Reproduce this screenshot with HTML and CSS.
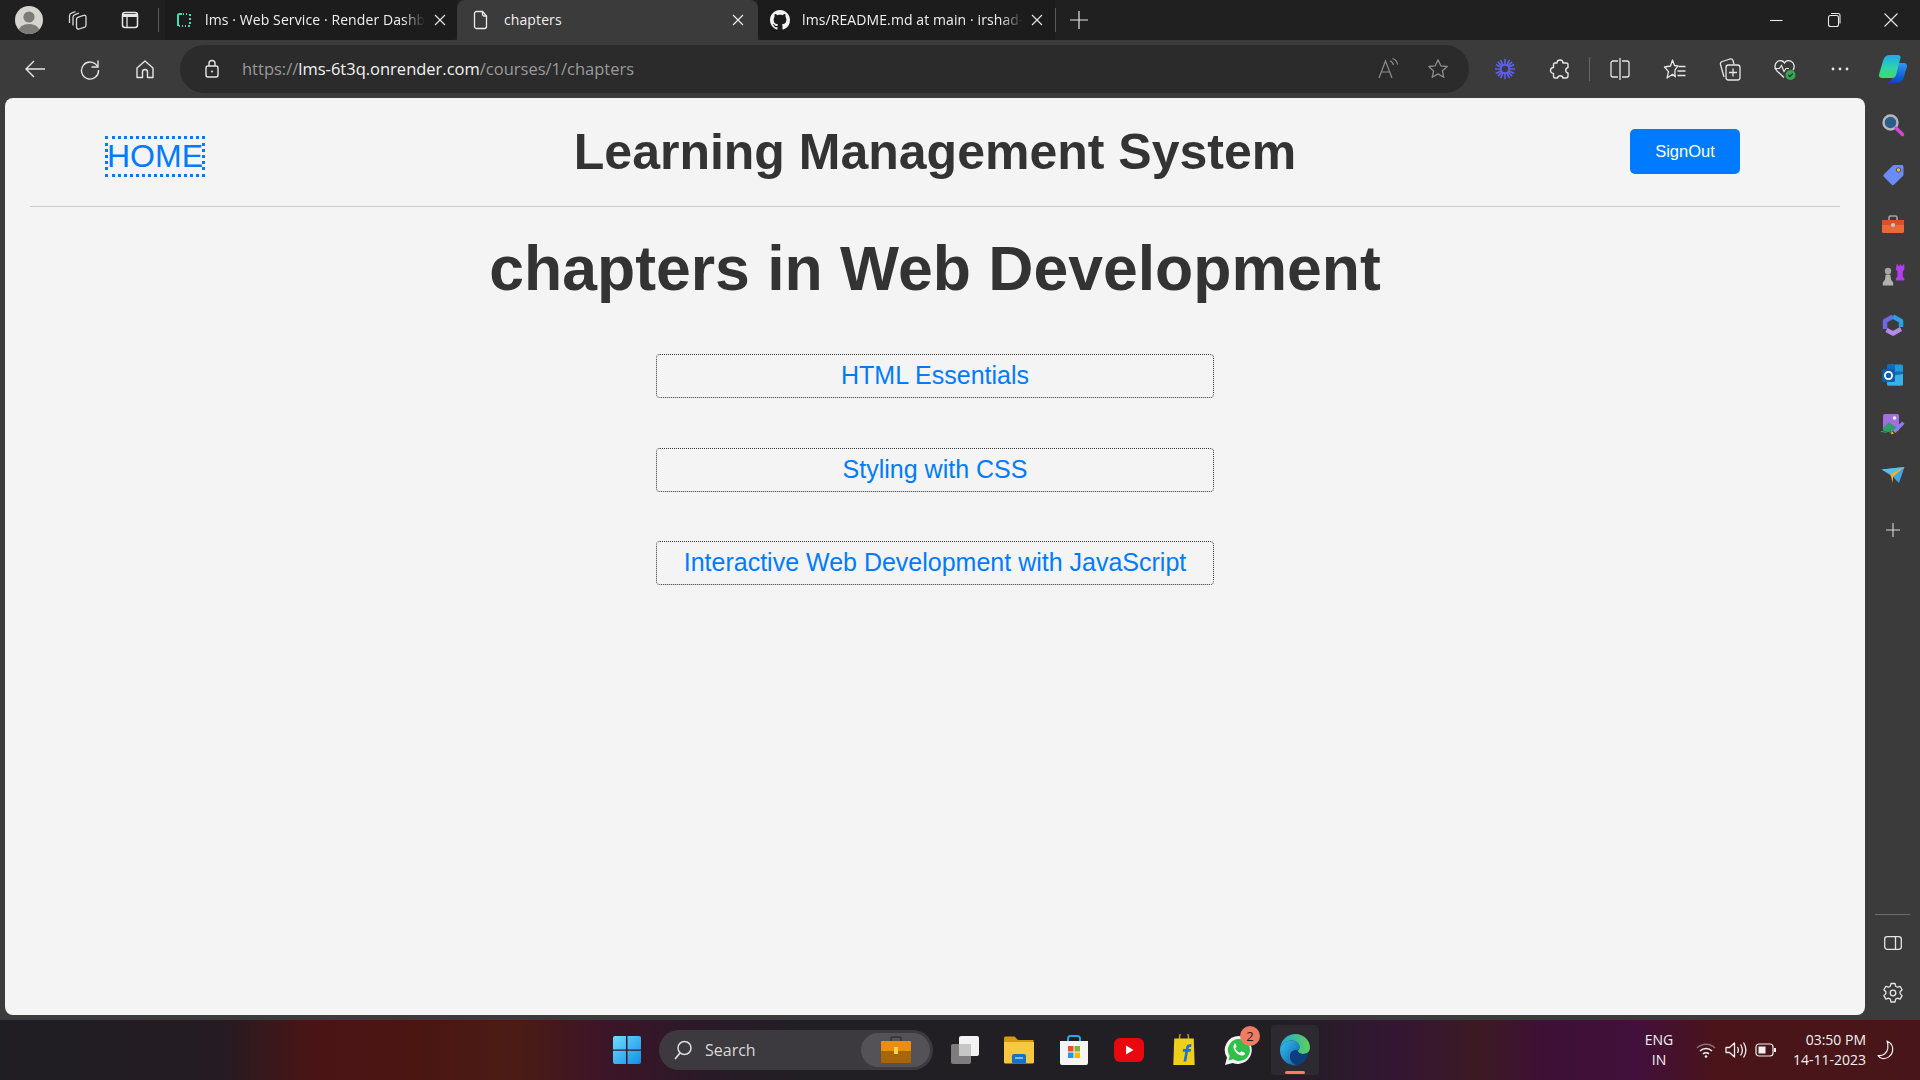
FILE: index.html
```html
<!doctype html>
<html>
<head>
    <title>chapters</title>
    <meta charset="utf-8">
    <link rel="stylesheet" href="styles.css">
</head>
<body>
<div class="window">
    <div class="tabstrip">
        <div class="avatar">
            <svg width="28" height="28" viewBox="0 0 28 28"><defs><clipPath id="avclip"><circle cx="14" cy="14" r="14"/></clipPath></defs><g clip-path="url(#avclip)"><rect width="28" height="28" fill="#d6d4cf"/><circle cx="14" cy="11" r="5.6" fill="#7d7b78"/><ellipse cx="14" cy="25" rx="10.5" ry="7" fill="#7d7b78"/></g></svg>
        </div>
        <div class="strip-btn">
            <svg width="24" height="24" viewBox="0 0 24 24" fill="none" stroke="#d8d8d8" stroke-width="1.300"><path d="M4.500 15V8a3 3 0 0 1 2-2.800L10.500 3.500"/><path d="M8 17.500V9.500a3 3 0 0 1 2-2.800l4-1.700"/><path d="M11.500 11.500a2.500 2.500 0 0 1 1.800-2.400l5.500-1.700a1.600 1.600 0 0 1 2.200 1.500V17a2.500 2.500 0 0 1-1.800 2.400L14 21a2 2 0 0 1-2.500-2z" stroke-linejoin="round"/></svg>
        </div>
        <div class="strip-btn wide">
            <svg width="20" height="20" viewBox="0 0 20 20" fill="none" stroke="#e6e6e6" stroke-width="1.500"><rect x="2.500" y="2.500" width="15" height="15" rx="2.500"/><path d="M7 7v10.500" stroke-width="1.300"/><path d="M3 5.500h14" stroke-width="3"/></svg>
        </div>
        <div class="strip-divider"></div>
        <div class="tab tab-first">
            <svg class="tab-icon" width="16" height="16" viewBox="0 0 16 16" fill="none"><path d="M6 2H3.500A1.500 1.500 0 0 0 2 3.500V14" stroke="#3fe0b8" stroke-width="2"/><path d="M3 14h1M6 14h1M9 14h1M12 14h2M14 12v-2M14 8V6M14 4V2M11 2h-1M8 2h-1" stroke="#3fe0b8" stroke-width="2"/></svg>
            <span class="tab-title">lms · Web Service · Render Dashboard</span>
            <svg class="tab-close" width="16" height="16" viewBox="0 0 16 16" stroke="#e8e8e8" stroke-width="1.100"><path d="M3 3l10 10M13 3 3 13"/></svg>
        </div>
        <div class="tab tab-active">
            <svg class="tab-icon" width="16" height="20" viewBox="0 0 16 20" fill="none" stroke="#ececec" stroke-width="1.300"><path d="M3.500 1.500h6l4 4.500v10.500a2 2 0 0 1-2 2h-8a2 2 0 0 1-2-2v-13a2 2 0 0 1 2-2z"/><path d="M9.500 1.500v3a1.500 1.500 0 0 0 1.500 1.500h2.500"/></svg>
            <span class="tab-title">chapters</span>
            <svg class="tab-close" width="16" height="16" viewBox="0 0 16 16" stroke="#f0f0f0" stroke-width="1.100"><path d="M3 3l10 10M13 3 3 13"/></svg>
        </div>
        <div class="tab tab-last">
            <svg class="tab-icon" width="20" height="20" viewBox="0 0 16 16" fill="#f4f4f4"><path d="M8 0C3.58 0 0 3.58 0 8c0 3.54 2.29 6.53 5.47 7.59.4.07.55-.17.55-.38 0-.19-.01-.82-.01-1.49-2.01.37-2.53-.49-2.69-.94-.09-.23-.48-.94-.82-1.13-.28-.15-.68-.52-.01-.53.63-.01 1.08.58 1.23.82.72 1.21 1.87.87 2.33.66.07-.52.28-.87.51-1.07-1.78-.2-3.64-.89-3.64-3.95 0-.87.31-1.59.82-2.15-.08-.2-.36-1.02.08-2.12 0 0 .67-.21 2.2.82.64-.18 1.32-.27 2-.27.68 0 1.36.09 2 .27 1.53-1.04 2.2-.82 2.2-.82.44 1.1.16 1.92.08 2.12.51.56.82 1.27.82 2.15 0 3.07-1.87 3.75-3.65 3.95.29.25.54.73.54 1.48 0 1.07-.01 1.93-.01 2.2 0 .21.15.46.55.38A8.013 8.013 0 0 0 16 8c0-4.42-3.58-8-8-8z"/></svg>
            <span class="tab-title">lms/README.md at main · irshad-ahmed/lms</span>
            <svg class="tab-close" width="16" height="16" viewBox="0 0 16 16" stroke="#e8e8e8" stroke-width="1.100"><path d="M3 3l10 10M13 3 3 13"/></svg>
        </div>
        <div class="strip-divider"></div>
        <div class="new-tab">
            <svg width="20" height="20" viewBox="0 0 20 20" stroke="#e8e8e8" stroke-width="1.200"><path d="M10 1v18M1 10h18"/></svg>
        </div>
        <div class="window-controls">
            <svg width="16" height="16" viewBox="0 0 16 16" stroke="#e8e8e8" stroke-width="1.100"><path d="M2 8.500h12.500"/></svg>
            <svg width="16" height="16" viewBox="0 0 16 16" fill="none" stroke="#e8e8e8" stroke-width="1.100"><rect x="2.500" y="3.500" width="10" height="11" rx="2"/><path d="M5 1.500h7a2 2 0 0 1 2 2v8"/></svg>
            <svg width="16" height="16" viewBox="0 0 16 16" stroke="#e8e8e8" stroke-width="1.100"><path d="M1.500 1.500l13 13M14.500 1.500l-13 13"/></svg>
        </div>
    </div>

    <div class="toolbar">
        <div class="tool">
            <svg width="22" height="22" viewBox="0 0 22 22" fill="none" stroke="#e6e6e6" stroke-width="1.400"><path d="M2 11h19M10 3l-8 8 8 8"/></svg>
        </div>
        <div class="tool">
            <svg width="22" height="22" viewBox="0 0 22 22" fill="none" stroke="#e6e6e6" stroke-width="1.400"><path d="M18.500 8.500A8.500 8.500 0 1 0 19.500 12"/><path d="M19 2.500v6.500h-6.500"/></svg>
        </div>
        <div class="tool">
            <svg width="22" height="22" viewBox="0 0 22 22" fill="none" stroke="#e6e6e6" stroke-width="1.400"><path d="M3 10 11 3l8 7v9.500h-5.500V14a2.500 2.500 0 0 0-5 0v5.500H3z" stroke-linejoin="round"/></svg>
        </div>
        <div class="address">
            <svg width="16" height="20" viewBox="0 0 16 20" fill="none" stroke="#e6e6e6" stroke-width="1.400"><rect x="2" y="7" width="12" height="11" rx="2"/><path d="M5 7V4.500a3 3 0 0 1 6 0V7"/><circle cx="8" cy="12.500" r="1" fill="#e6e6e6" stroke="none"/></svg>
            <span class="url"><span class="url-dim">https://</span><span class="url-host">lms-6t3q.onrender.com</span><span class="url-dim">/courses/1/chapters</span></span>
            <svg class="read-aloud" width="24" height="22" viewBox="0 0 24 22" fill="none" stroke="#8c8c8c" stroke-width="1.200"><path d="M2 20 8.500 3l6.500 17M4.500 14h8"/><path d="M13 3c2 .5 3 2 3.500 4M15.500.5c3 .8 4.500 3 5 6"/></svg>
            <svg class="addr-star" width="22" height="22" viewBox="0 0 22 22" fill="none" stroke="#8c8c8c" stroke-width="1.300"><path d="M11 1.800l2.800 6 6.400.7-4.800 4.400 1.400 6.400L11 15.900l-5.800 3.400 1.400-6.400L1.800 8.500l6.400-.7z" stroke-linejoin="round"/></svg>
        </div>
        <div class="tool">
            <svg width="22" height="22" viewBox="0 0 22 22" stroke="#5f5ff7"><path d="M11 1v20M1 11h20M3.900 3.900l14.200 14.200M18.100 3.900 3.900 18.100M6.500 1.800l9 18.400M15.500 1.800l-9 18.400M1.800 6.500l18.400 9M20.200 6.500l-18.400 9" stroke-width="1.600"/><circle cx="11" cy="11" r="4.200" fill="#3b3b3b" stroke-width="1.800"/></svg>
        </div>
        <div class="tool">
            <svg width="22" height="22" viewBox="0 0 22 22" fill="none" stroke="#e6e6e6" stroke-width="1.400"><path d="M8 5a3 3 0 0 1 6 0h3.500a1.500 1.500 0 0 1 1.500 1.500V9.500a2.800 2.800 0 0 0 0 5.500v3a2 2 0 0 1-2 2h-3a2.800 2.800 0 0 0-5.500 0H6a1.500 1.500 0 0 1-1.500-1.500v-3a3 3 0 0 1 0-6V6.500A1.500 1.500 0 0 1 6 5z" stroke-linejoin="round"/></svg>
        </div>
        <div class="tool-divider"></div>
        <div class="tool">
            <svg width="22" height="24" viewBox="0 0 22 24" fill="none" stroke="#e6e6e6" stroke-width="1.300"><path d="M9 4H4a2 2 0 0 0-2 2v12a2 2 0 0 0 2 2h5M13 4h5a2 2 0 0 1 2 2v12a2 2 0 0 1-2 2h-5M11 1v22"/></svg>
        </div>
        <div class="tool">
            <svg width="24" height="22" viewBox="0 0 24 22" fill="none" stroke="#e6e6e6" stroke-width="1.300"><path d="M9.500 2l2 5.500 3.500.3-3 4-.1 4 .4 3-2.800-2.500-5.500 3.700 1.500-6.300L1.500 9l6-1z" stroke-linejoin="round"/><path d="M15.500 8.500h7M14.500 13h8M14.500 17.500h8"/></svg>
        </div>
        <div class="tool">
            <svg width="24" height="24" viewBox="0 0 24 24" fill="none" stroke="#e6e6e6" stroke-width="1.300"><path d="M6 20 2.500 7.500a2.500 2.500 0 0 1 1.700-3L12 2a2.500 2.500 0 0 1 3 1.500L16 7"/><rect x="8" y="8" width="14" height="15" rx="2.500"/><path d="M15 11.500v8M11 15.500h8"/></svg>
        </div>
        <div class="tool">
            <svg width="24" height="24" viewBox="0 0 24 24" fill="none"><path d="M11 20.500 4 14C1 11 1.500 6.500 4.500 4.500 7 3 10 3.500 11.500 6c1.500-2.500 4.500-3 7-1.500 3 2 3.500 6 1.500 8.500" stroke="#e6e6e6" stroke-width="1.300"/><path d="M1.500 11.500h5l2-3 2.500 6 2-3h3" stroke="#e6e6e6" stroke-width="1.200"/><circle cx="17.500" cy="18" r="5" fill="#3aa655"/><path d="M15.300 18l1.600 1.600 2.800-3" stroke="#1d2a1f" stroke-width="1.200"/></svg>
        </div>
        <div class="tool">
            <svg width="20" height="6" viewBox="0 0 20 6" fill="#e6e6e6"><circle cx="3" cy="3" r="1.400"/><circle cx="10" cy="3" r="1.400"/><circle cx="17" cy="3" r="1.400"/></svg>
        </div>
        <div class="tool copilot">
            <svg width="32" height="32" viewBox="0 0 32 32"><defs><linearGradient id="cpA" x1="0" y1="0" x2="0" y2="1"><stop offset="0" stop-color="#21a8f0"/><stop offset=".6" stop-color="#2fd6a0"/><stop offset="1" stop-color="#45d870"/></linearGradient><linearGradient id="cpB" x1="0" y1="0" x2="0" y2="1"><stop offset="0" stop-color="#2a9bf5"/><stop offset="1" stop-color="#1440c4"/></linearGradient></defs><path d="M19 10h8c2 0 3.500 1.500 3 3.500L26.500 25c-.8 3-3 5-6 5H9c3 0 4.500-1.500 5.500-4z" fill="url(#cpB)"/><path d="M12 2h9c2 0 3 1.500 2.500 3L19 22c-.6 2-2 3-4 3H5c-2 0-3.500-1.500-3-3.500L6 8c.8-3 3-6 6-6z" fill="url(#cpA)"/></svg>
        </div>
    </div>

    <div class="main-row">
        <div class="viewport">
            <header class="site-header">
                <a class="home-link" href="#">HOME</a>
                <h1 class="site-title">Learning Management System</h1>
                <button class="signout">SignOut</button>
            </header>
            <hr class="rule">
            <h1 class="page-title">chapters in Web Development</h1>
            <ul class="chapter-list">
                <li><a href="#">HTML Essentials</a></li>
                <li><a href="#">Styling with CSS</a></li>
                <li><a href="#">Interactive Web Development with JavaScript</a></li>
            </ul>
        </div>

        <aside class="sidebar">
            <div class="side-item">
                <svg width="24" height="24" viewBox="0 0 24 24"><circle cx="9.500" cy="9.500" r="7" fill="#2b5f8a" stroke="#b4b8bd" stroke-width="2.400"/><path d="M15 15l6.500 6.500" stroke="#d946d6" stroke-width="3.400" stroke-linecap="round"/></svg>
            </div>
            <div class="side-item">
                <svg width="24" height="24" viewBox="0 0 24 24"><path d="M13 2h8a1.500 1.500 0 0 1 1.500 1.500v8a2 2 0 0 1-.6 1.400l-9 8.800a1.500 1.500 0 0 1-2.100 0l-8-8a1.500 1.500 0 0 1 0-2.100l9-9A2 2 0 0 1 13 2z" fill="#6b8cf5"/><circle cx="17.500" cy="7" r="2.200" fill="#f0c020" stroke="#33337a" stroke-width=".8"/></svg>
            </div>
            <div class="side-item">
                <svg width="24" height="22" viewBox="0 0 24 22"><path d="M8 6V3.500A1.500 1.500 0 0 1 9.500 2h5A1.500 1.500 0 0 1 16 3.500V6" fill="none" stroke="#a3a3a3" stroke-width="1.600"/><path d="M1 6h22v5H1z" fill="#d9502e"/><path d="M1 11h22v6.500a1.500 1.500 0 0 1-1.500 1.500h-19A1.500 1.500 0 0 1 1 17.500z" fill="#e8693a"/><circle cx="12" cy="11" r="2" fill="#c8c8c8"/></svg>
            </div>
            <div class="side-item">
                <svg width="24" height="24" viewBox="0 0 24 24"><path d="M15.500 1.500h1.600v1.500h1.400V1.500h1.800v1.500h1.400V1.500h1.600v5l-1.500 2v5l1.500 2v2h-8.400v-2l1.500-2v-5l-1.500-2z" fill="#b13ff0"/><circle cx="7" cy="8" r="3.200" fill="#a5a5a5"/><path d="M4.800 11.500h4.400l1 5.500 2 2.500v3H1.800v-3l2-2.500z" fill="#b0b0b0"/></svg>
            </div>
            <div class="side-item">
                <svg width="24" height="24" viewBox="0 0 24 24" fill="none" stroke-width="4.500" stroke-linejoin="round"><path d="M12 3.500 4 8v8" stroke="#6c6ae0"/><path d="M12 3.500 20 8v6" stroke="#2a9fe6"/><path d="M20 16l-8 4.500L5.500 17" stroke="#b48be8"/></svg>
            </div>
            <div class="side-item">
                <svg width="24" height="24" viewBox="0 0 24 24"><rect x="6" y="1.500" width="16" height="21" rx="1.500" fill="#1f9ad6"/><path d="M6 1.500h8v7H6zM14 8.500h8v7h-8z" fill="#0f6cbd"/><path d="M10 13l12-2v10a1.500 1.500 0 0 1-1.500 1.500h-13A1.500 1.500 0 0 1 6 21v-6z" fill="#36b2e8"/><rect x="1" y="6" width="13" height="13" rx="1.500" fill="#0f5fa8"/><circle cx="7.500" cy="12.500" r="3.600" fill="none" stroke="#fff" stroke-width="1.800"/></svg>
            </div>
            <div class="side-item">
                <svg width="26" height="24" viewBox="0 0 26 24"><rect x="3" y="1" width="16" height="17" rx="2" fill="#a36fe0"/><path d="M3 15l6-6 5 4 5 2v1a2 2 0 0 1-2 2H5a2 2 0 0 1-2-2z" fill="#2e9e6a"/><circle cx="14.500" cy="5" r="1.800" fill="#f3e8ff"/><path d="M1 19c2-2 3 1 5 0s3-1 5 .5" fill="none" stroke="#27a15a" stroke-width="1.300"/><path d="M13 18l9-9.500 2.500 2.200-9 9.300z" fill="#8f7cf2"/><path d="M11.500 17.500l2.500 3-3 1z" fill="#f2b01e"/></svg>
            </div>
            <div class="side-item">
                <svg width="24" height="18" viewBox="0 0 24 18"><path d="M.5 3.500 23.500 1l-5.500 16-6-6z" fill="#3fa4ee"/><path d="M.5 3.500 23.500 1 9.500 8z" fill="#56c0f2"/><path d="M9.500 8 23.500 1 12 11l-.5 6z" fill="#f2b01e"/></svg>
            </div>
            <div class="side-item side-add">
                <svg width="16" height="16" viewBox="0 0 16 16" stroke="#d8d8d8" stroke-width="1.100"><path d="M8 1v14M1 8h14"/></svg>
            </div>
            <div class="side-bottom">
                <div class="side-rule"></div>
                <div class="side-item">
                    <svg width="20" height="18" viewBox="0 0 20 18" fill="none" stroke="#e6e6e6" stroke-width="1.300"><rect x="1.700" y="2.700" width="16.600" height="12.600" rx="2.500"/><path d="M12.500 3v12"/></svg>
                </div>
                <div class="side-item">
                    <svg width="22" height="22" viewBox="0 0 22 22" fill="none" stroke="#e6e6e6" stroke-width="1.300"><path d="M9 1.500h4l.7 2.800 1.700.9 2.700-.9 2 3.500-2 2v1.800l2 2-2 3.500-2.700-.9-1.700.9-.7 2.900H9l-.7-2.900-1.700-.9-2.700.9-2-3.500 2-2V9.800l-2-2 2-3.500 2.700.9 1.700-.9z" stroke-linejoin="round"/><circle cx="11" cy="11" r="2.800"/></svg>
                </div>
            </div>
        </aside>
    </div>

    <div class="taskbar">
        <div class="start">
            <svg width="30" height="30" viewBox="0 0 30 30"><defs><linearGradient id="winA" x1="0" y1="0" x2="1" y2="1"><stop offset="0" stop-color="#6fdcff"/><stop offset="1" stop-color="#0f8fe8"/></linearGradient></defs><path d="M1 3a2 2 0 0 1 2-2h11v13.400H1zM15.500 1H27a2 2 0 0 1 2 2v11.400H15.500zM1 15.800h13V29H3a2 2 0 0 1-2-2zM15.500 15.800H29V27a2 2 0 0 1-2 2H15.500z" fill="url(#winA)"/></svg>
        </div>
        <div class="search-pill">
            <svg width="22" height="22" viewBox="0 0 22 22" fill="none" stroke="#dcdcdc" stroke-width="1.500"><circle cx="12.500" cy="9" r="6.500"/><path d="M8 14l-5 6" stroke-width="1.800"/></svg>
            <span class="search-text">Search</span>
            <div class="search-badge">
                <svg width="32" height="30" viewBox="0 0 32 30"><path d="M11 6V3.500A1.500 1.500 0 0 1 12.500 2h7A1.500 1.500 0 0 1 21 3.500V6" fill="none" stroke="#333" stroke-width="1.500"/><rect x="1" y="6" width="30" height="10" fill="#e88f0c"/><rect x="1" y="16" width="30" height="12" rx="1" fill="#a8650a"/><rect x="14" y="12" width="4" height="7" fill="#f7d44c"/></svg>
            </div>
        </div>
        <div class="task task-first">
            <svg width="32" height="30" viewBox="0 0 32 30"><rect x="11" y="1" width="20" height="20" rx="2" fill="#f2f2f2"/><rect x="3" y="9" width="20" height="20" rx="2" fill="#8b8b8b" fill-opacity=".88"/><rect x="11" y="9" width="12" height="12" fill="#c6c6c6"/></svg>
        </div>
        <div class="task">
            <svg width="32" height="30" viewBox="0 0 32 30"><path d="M1 3a1.500 1.500 0 0 1 1.500-1.500h9L15 5h15.500v4H1z" fill="#d69a12"/><path d="M1 7h30v20a1.500 1.500 0 0 1-1.500 1.500h-27A1.500 1.500 0 0 1 1 27z" fill="#f8c940"/><path d="M9 28.500V21a2 2 0 0 1 2-2h10a2 2 0 0 1 2 2v7.500z" fill="#1672c4"/><path d="M12 23h8" stroke="#9fd4ff" stroke-width="1.500"/></svg>
        </div>
        <div class="task">
            <svg width="30" height="32" viewBox="0 0 30 32"><path d="M9 9V4.500A2.500 2.500 0 0 1 11.500 2h7A2.500 2.500 0 0 1 21 4.500V9" fill="none" stroke="#29a8e8" stroke-width="2"/><path d="M1 7h28v22a2 2 0 0 1-2 2H3a2 2 0 0 1-2-2z" fill="#f5f5f5"/><rect x="9" y="12" width="5.500" height="5.500" fill="#e84f2a"/><rect x="15.500" y="12" width="5.500" height="5.500" fill="#7cb82f"/><rect x="9" y="18.500" width="5.500" height="5.500" fill="#1e9be0"/><rect x="15.500" y="18.500" width="5.500" height="5.500" fill="#f5b800"/></svg>
        </div>
        <div class="task">
            <svg width="30" height="30" viewBox="0 0 30 30"><rect x="0" y="3" width="30" height="24" rx="6" fill="#e8080e"/><path d="M12 10.500v9l7.500-4.500z" fill="#fff"/></svg>
        </div>
        <div class="task">
            <svg width="26" height="32" viewBox="0 0 26 36"><path d="M8 6V3a5 5 0 0 1 10 0v3" fill="none" stroke="#c9a418" stroke-width="1.500"/><path d="M2 5h22l1 30H1z" fill="#f0cf1c"/><path d="M12.500 31l2-11h-3l.5-3h3l.5-2.500c.4-2 1.800-3 4-3h2l-.5 3h-1.300c-.8 0-1.200.4-1.400 1.200l-.3 1.300h3l-.5 3h-3L15.500 31z" fill="#1c6fe0"/></svg>
        </div>
        <div class="task whatsapp">
            <svg width="32" height="36" viewBox="0 0 32 36"><path d="M16 4a14 14 0 0 0-12 21.500L2 33l7.700-2A14 14 0 1 0 16 4z" fill="#f4f4f4"/><path d="M16 7a11 11 0 0 0-9.300 17l-1.200 4.500 4.600-1.200A11 11 0 1 0 16 7z" fill="#30c04a"/><path d="M12 12c-1 .5-1.800 1.800-1.500 3.500.8 4 4 7.200 7.800 8 1.700.3 3-.5 3.500-1.600.3-.7 0-1-.5-1.300l-2.500-1.200c-.5-.2-.8 0-1.100.4l-.8 1c-2.200-.8-3.800-2.400-4.700-4.600l1-.9c.4-.3.500-.6.300-1.100l-1-2.400c-.3-.5-.8-.6-1.500-.3z" fill="#f4f4f4"/></svg>
            <span class="badge">2</span>
        </div>
        <div class="task task-active">
            <svg width="32" height="34" viewBox="0 0 32 34"><defs><linearGradient id="edA" x1="0" y1="0" x2="1" y2="1"><stop offset="0" stop-color="#35c1f1"/><stop offset="1" stop-color="#0c59a4"/></linearGradient><linearGradient id="edB" x1="0" y1="0" x2="1" y2="0"><stop offset="0" stop-color="#1fa8d8"/><stop offset="1" stop-color="#5fd05a"/></linearGradient></defs><path d="M1 17C1 7.500 8 1 16.500 1 25 1 31 7.500 31 14.500c0 4.500-3.500 6.500-7 6.500-3 0-5.500-1-5.500-2.500 0-1 2-1.500 2-4.500 0-4-4-6.500-8-6.500C7 7.500 1 12 1 17z" fill="url(#edB)"/><path d="M1 17c0-5 6-9.500 11.500-9.500 4 0 8 2.500 8 6.500 0 2-1.200 3-1.800 3.700C15 16 11 19 11 23.500c0 4 3 7.500 7.500 9C8 33 1 26 1 17z" fill="url(#edA)"/><path d="M11 23.500c0-4.500 4-7.500 7.700-5.800.7 2 3 3.300 5.300 3.300 2.500 0 4.500-.8 5.500-1.500-1.500 7.500-6.500 12.500-11 12.500-4.500-1.500-7.500-4.500-7.500-8.500z" fill="#0d3f80"/></svg>
            <span class="task-marker"></span>
        </div>
        <div class="tray">
            <div class="lang">ENG<br>IN</div>
            <div class="tray-icon">
                <svg width="20" height="16" viewBox="0 0 20 16" fill="none" stroke="#f2f2f2" stroke-width="1.500"><path d="M1 6a12.500 12.500 0 0 1 18 0" stroke-opacity=".4"/><path d="M4 9a8.500 8.500 0 0 1 12 0"/><path d="M7 12a4.200 4.200 0 0 1 6 0"/><circle cx="10" cy="14.500" r="1.300" fill="#f2f2f2" stroke="none"/></svg>
            </div>
            <div class="tray-icon">
                <svg width="22" height="18" viewBox="0 0 22 18" fill="none" stroke="#f2f2f2" stroke-width="1.300"><path d="M1 6.500h3.500L9.500 2v14l-5-4.500H1z" stroke-linejoin="round"/><path d="M12.500 6c1.200 2 1.200 4 0 6M15.500 3.500c2.400 3.500 2.400 7.500 0 11M18.500 1.500c3.200 5 3.200 10 0 15"/></svg>
            </div>
            <div class="tray-icon">
                <svg width="22" height="14" viewBox="0 0 22 14" fill="none" stroke="#f2f2f2" stroke-width="1.200"><rect x="1" y="1" width="17" height="12" rx="3"/><path d="M20 5v4" stroke-width="2"/><rect x="3.500" y="3.500" width="7" height="7" fill="#f2f2f2" stroke="none"/></svg>
            </div>
            <div class="clock">03:50 PM<br>14-11-2023</div>
            <div class="moon">
                <svg width="18" height="20" viewBox="0 0 18 20" fill="none" stroke="#f2f2f2" stroke-width="1.200"><path d="M10 1c4 2 6.500 6 5.500 10.500C14.500 16 10 19 5.500 18.500 3.500 18.200 1.800 17 1 15.500c5 .8 9-2.500 9.800-6.800C11.200 6 11 3 10 1z" stroke-linejoin="round"/></svg>
            </div>
        </div>
    </div>
</div>
</body>
</html>
```

FILE: styles.css
```css
* {
    box-sizing: border-box;
}

body {
    margin: 0;
    overflow: hidden;
    font-family: "Open Sans", "Noto Sans", sans-serif;
}

.window {
    display: flex;
    flex-direction: column;
    width: 1920px;
    height: 1080px;
    background: #3b3b3b;
}

/* tab strip */
.tabstrip {
    display: flex;
    align-items: center;
    height: 40px;
    padding-left: 6px;
    background: #202020;
    color: #f0f0f0;
    font-size: 14px;
}

.avatar {
    display: flex;
    justify-content: center;
    width: 46px;
}

.strip-btn {
    display: flex;
    justify-content: center;
    width: 50px;
}

.strip-btn.wide {
    width: 56px;
}

.strip-divider {
    width: 1px;
    height: 24px;
    background: #5a5a5a;
}

.tab {
    display: flex;
    align-items: center;
    height: 40px;
}

.tab-title {
    flex: 1;
    min-width: 0;
    padding-bottom: 2px;
    overflow: hidden;
    white-space: nowrap;
    letter-spacing: 0.1px;
    -webkit-mask-image: linear-gradient(to right, #000 90%, transparent);
    mask-image: linear-gradient(to right, #000 90%, transparent);
}

.tab-first {
    width: 292px;
    margin-left: 6px;
    padding: 0 9px 0 11px;
    background: #1c1c1c;
    border-bottom-right-radius: 6px;
}

.tab-first .tab-title {
    margin: 0 7px 0 13px;
}

.tab-active {
    width: 301px;
    padding: 0 12px 0 16px;
    background: #3b3b3b;
    border-radius: 8px 8px 0 0;
}

.tab-active .tab-title {
    margin: 0 7px 0 15px;
    -webkit-mask-image: none;
    mask-image: none;
}

.tab-last {
    width: 297px;
    padding: 0 10px 0 12px;
    background: #1c1c1c;
    border-bottom-left-radius: 6px;
}

.tab-last .tab-title {
    margin: 0 6px 0 12px;
}

.new-tab {
    display: flex;
    justify-content: center;
    width: 46px;
}

.window-controls {
    display: flex;
    justify-content: space-between;
    align-items: center;
    width: 131px;
    margin-left: auto;
    margin-right: 21px;
}

/* toolbar */
.toolbar {
    display: flex;
    align-items: center;
    height: 58px;
    padding-left: 7px;
    background: #3b3b3b;
}

.tool {
    display: flex;
    justify-content: center;
    align-items: center;
    flex: none;
    width: 55px;
}

.copilot {
    width: 52px;
}

.tool-divider {
    flex: none;
    width: 1px;
    height: 24px;
    margin: 0 2px;
    background: #666;
}

.address {
    display: flex;
    align-items: center;
    flex: none;
    width: 1289px;
    height: 48px;
    margin: 0 8px;
    padding: 0 20px 0 24px;
    background: #2b2b2b;
    border-radius: 24px;
}

.url {
    margin-left: 22px;
    padding-bottom: 1px;
    font-size: 16.5px;
}

.url-dim {
    color: #9a9a9a;
}

.url-host {
    color: #f2f2f2;
}

.read-aloud {
    margin-left: auto;
}

.addr-star {
    margin-left: 26px;
}

/* middle: page and sidebar */
.main-row {
    display: flex;
    height: 922px;
}

.viewport {
    width: 1860px;
    height: 917px;
    margin-left: 5px;
    background: #f4f4f4;
    border-radius: 8px;
    color: #333;
    font-family: "Liberation Sans", Arial, sans-serif;
}

.site-header {
    display: grid;
    grid-template-columns: 1fr auto 1fr;
    align-items: center;
    padding: 26px 102px 25px;
}

.home-link {
    justify-self: start;
    margin-top: 8px;
    color: #007bff;
    font-size: 32px;
    text-decoration: none;
    outline: 3px dotted #007bff;
    outline-offset: -1px;
}

.site-title {
    margin: 0;
    font-size: 50px;
    font-weight: bold;
    line-height: 57px;
}

.signout {
    justify-self: end;
    width: 110px;
    height: 45px;
    margin: 0 23px 2px 0;
    border: 0;
    border-radius: 5px;
    background: #007bff;
    color: #fff;
    font-family: inherit;
    font-size: 16.5px;
}

.rule {
    height: 1px;
    margin: 0 25px;
    border: 0;
    background: #ccc;
}

.page-title {
    margin: 25px 0 0;
    text-align: center;
    font-size: 62.5px;
    font-weight: bold;
    line-height: 72px;
}

.chapter-list {
    display: flex;
    flex-direction: column;
    gap: 49.5px;
    width: 558px;
    margin: 50px auto 0;
    padding: 0;
    list-style: none;
}

.chapter-list a {
    display: block;
    height: 44px;
    border: 1px dotted #333;
    border-radius: 4px;
    color: #007bff;
    font-size: 25px;
    line-height: 41px;
    text-align: center;
    text-decoration: none;
}

.sidebar {
    display: flex;
    flex-direction: column;
    width: 55px;
    padding: 2px 0;
}

.side-item {
    display: flex;
    justify-content: center;
    align-items: center;
    height: 50px;
    flex: none;
}

.side-add {
    margin-top: 5px;
}

.side-bottom {
    margin-top: auto;
}

.side-rule {
    height: 1px;
    margin: 0 10px 3px;
    background: #6c6c6c;
}

/* taskbar */
.taskbar {
    display: flex;
    align-items: center;
    height: 60px;
    padding-left: 603px;
    background: linear-gradient(90deg, #1f1e23 0, #241c22 220px, #4a1416 310px, #4b1612 420px, #4a1c14 520px, #3e1428 600px, #2a1a28 700px, #211f24 800px, #211f24 1270px, #341632 1400px, #3c1a22 1480px, #3e1036 1540px, #42103a 1640px, #4a1418 1720px, #48161a 1920px);
    color: #f2f2f2;
}

.start {
    display: flex;
    justify-content: center;
    width: 48px;
}

.search-pill {
    display: flex;
    align-items: center;
    width: 274px;
    height: 40px;
    margin-left: 8px;
    padding: 0 3px 0 13px;
    background: #3c3a3f;
    border-radius: 20px;
}

.search-text {
    margin-left: 11px;
    color: #d8d8d8;
    font-size: 16px;
}

.search-badge {
    display: flex;
    justify-content: center;
    align-items: center;
    width: 69px;
    height: 34px;
    margin-left: auto;
    background: #545257;
    border-radius: 17px;
}

.task {
    display: flex;
    position: relative;
    justify-content: center;
    align-items: center;
    flex: none;
    width: 55px;
    height: 50px;
}

.task-first {
    margin-left: 3px;
}

.task-active {
    width: 48px;
    margin-left: 5px;
    background: #2c2a30;
    border-radius: 4px;
}

.badge {
    position: absolute;
    top: 1px;
    right: 6px;
    width: 20px;
    height: 20px;
    background: #ee7b62;
    border-radius: 50%;
    color: #1f1d22;
    font-size: 13px;
    line-height: 20px;
    text-align: center;
}

.task-marker {
    position: absolute;
    left: 14px;
    bottom: 1px;
    width: 20px;
    height: 3px;
    background: #f0806a;
    border-radius: 2px;
}

.tray {
    display: flex;
    align-items: center;
    margin-left: auto;
    padding-right: 24px;
}

.lang {
    width: 50px;
    margin-right: 7px;
    font-size: 14px;
    line-height: 20px;
    text-align: center;
}

.tray-icon {
    display: flex;
    justify-content: center;
    width: 30px;
}

.clock {
    width: 85px;
    font-size: 14px;
    line-height: 20px;
    text-align: right;
}

.moon {
    display: flex;
    justify-content: center;
    width: 20px;
    margin-left: 10px;
}
```
